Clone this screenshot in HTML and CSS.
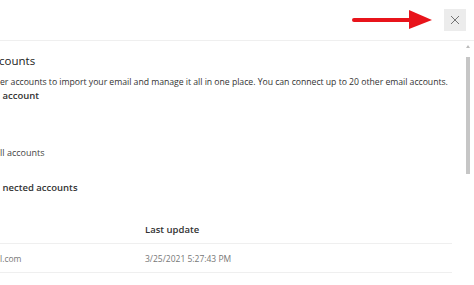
FILE: index.html
```html
<!DOCTYPE html>
<html lang="en">
  <head>
    <meta charset="UTF-8" />
    <meta name="viewport" content="width=device-width, initial-scale=1.0" />
    <title>Sync email</title>
    <link rel="stylesheet" href="styles.css">
  </head>
  <body>
    <div class="topbar">
      <svg class="arrow" width="82" height="20" viewBox="0 0 82 20">
        <rect x="0" y="8" width="60" height="4" rx="2" fill="#e8141b" />
        <polygon points="57,0 80,10 57,19" fill="#e8141b" />
      </svg>
      <button class="close" aria-label="Close">
        <svg width="10" height="10" viewBox="0 0 10 10">
          <path d="M1 1 L9 9 M9 1 L1 9" stroke="#666" stroke-width="0.9" fill="none" />
        </svg>
      </button>
    </div>

    <div class="main">
      <div class="content">
        <h2 class="heading">counts</h2>
        <p class="desc">er accounts to import your email and manage it all in one place. You can connect up to 20 other email accounts.</p>
        <p class="action">&nbsp;account</p>

        <p class="link">ll accounts</p>

        <h3 class="subheading">&nbsp;nected accounts</h3>

        <div class="table">
          <div class="row head">
            <span class="col-name"></span>
            <span class="col-date">Last update</span>
          </div>
          <div class="row">
            <span class="col-name">l.com</span>
            <span class="col-date">3/25/2021 5:27:43 PM</span>
          </div>
        </div>
      </div>

      <div class="scrollbar">
        <span class="scroll-up"></span>
        <span class="thumb"></span>
      </div>
    </div>
  </body>
</html>
```

FILE: styles.css
```css
body {
  font-family: "Open Sans", "Noto Sans", Arial, sans-serif;
  margin: 0;
  padding: 0;
  width: 474px;
  height: 285px;
  overflow: hidden;
  background-color: #fff;
  color: #333;
}

.topbar {
  height: 40px;
  border-bottom: 1px solid #efefef;
  display: flex;
  justify-content: flex-end;
  align-items: center;
  padding-right: 8px;
}

.arrow {
  margin-right: 10px;
}

.close {
  width: 22px;
  height: 22px;
  border: none;
  padding: 0;
  background-color: #ececec;
  display: flex;
  justify-content: center;
  align-items: center;
}

.main {
  display: flex;
  height: 244px;
}

.content {
  flex: 1;
  overflow: hidden;
}

.heading {
  font-size: 11.5px;
  font-weight: 400;
  color: #222;
  margin: 12px 0 0 -1px;
}

.desc {
  font-size: 8.7px;
  letter-spacing: -0.03px;
  white-space: nowrap;
  margin: 8px 0 0;
}

.action {
  font-size: 9.5px;
  font-weight: 600;
  margin: 1px 0 0;
}

.link {
  font-size: 9px;
  color: #444;
  margin: 44px 0 0;
}

.subheading {
  font-size: 9.5px;
  font-weight: 600;
  margin: 22px 0 0;
}

.table {
  width: 452px;
  margin-top: 21px;
}

.row {
  display: flex;
  align-items: center;
  height: 28px;
  border-bottom: 1px solid #efefef;
  font-size: 8.5px;
  color: #777;
}

.row.head {
  font-size: 9.5px;
  font-weight: 600;
  color: #333;
}

.col-name {
  width: 145px;
}

.scrollbar {
  width: 12px;
  display: flex;
  flex-direction: column;
  align-items: center;
  padding-top: 4px;
}

.scroll-up {
  width: 0;
  height: 0;
  border-left: 2px solid transparent;
  border-right: 2px solid transparent;
  border-bottom: 3px solid #bbb;
}

.thumb {
  width: 4px;
  height: 117px;
  margin-top: 9px;
  background-color: #c6c6c6;
}
```
